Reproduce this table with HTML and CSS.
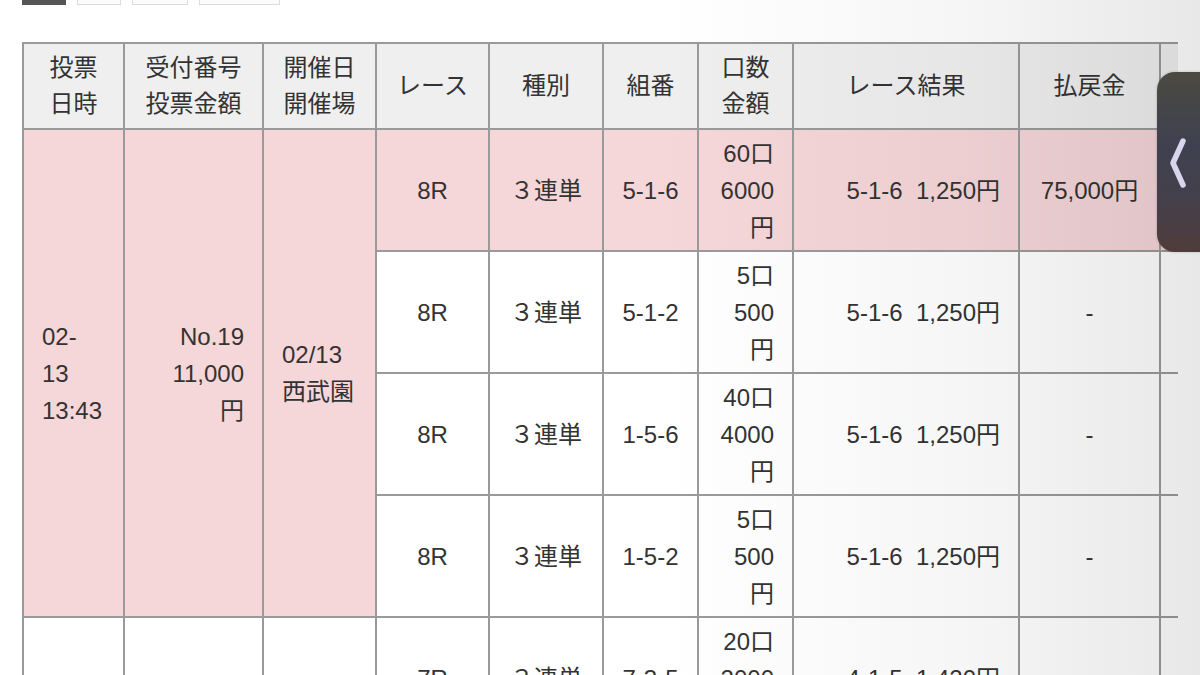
FILE: index.html
```html
<!DOCTYPE html>
<html lang="ja">
<head>
<meta charset="utf-8">
<link rel="stylesheet" href="styles.css">
</head>
<body>
<div class="tabs">
  <span class="tab tab-active t1"></span>
  <span class="tab t2"></span>
  <span class="tab t3"></span>
  <span class="tab t4"></span>
</div>
<div class="wrap">
  <table class="bets">
    <colgroup>
      <col class="c1"><col class="c2"><col class="c3"><col class="c4"><col class="c5">
      <col class="c6"><col class="c7"><col class="c8"><col class="c9"><col class="c10">
    </colgroup>
    <thead>
      <tr>
        <th>投票<br>日時</th>
        <th>受付番号<br>投票金額</th>
        <th>開催日<br>開催場</th>
        <th>レース</th>
        <th>種別</th>
        <th>組番</th>
        <th>口数<br>金額</th>
        <th>レース結果</th>
        <th>払戻金</th>
        <th></th>
      </tr>
    </thead>
    <tbody>
      <tr class="hit">
        <td rowspan="4" class="pink left">02-<br>13<br>13:43</td>
        <td rowspan="4" class="pink right">No.19<br>11,000<br>円</td>
        <td rowspan="4" class="pink left">02/13<br>西武園</td>
        <td class="center">8R</td>
        <td class="center">３連単</td>
        <td class="center">5-1-6</td>
        <td class="right">60口<br>6000<br>円</td>
        <td class="right">5-1-6&nbsp;&nbsp;1,250円</td>
        <td class="center">75,000円</td>
        <td></td>
      </tr>
      <tr>
        <td class="center">8R</td>
        <td class="center">３連単</td>
        <td class="center">5-1-2</td>
        <td class="right">5口<br>500<br>円</td>
        <td class="right">5-1-6&nbsp;&nbsp;1,250円</td>
        <td class="center">-</td>
        <td></td>
      </tr>
      <tr>
        <td class="center">8R</td>
        <td class="center">３連単</td>
        <td class="center">1-5-6</td>
        <td class="right">40口<br>4000<br>円</td>
        <td class="right">5-1-6&nbsp;&nbsp;1,250円</td>
        <td class="center">-</td>
        <td></td>
      </tr>
      <tr>
        <td class="center">8R</td>
        <td class="center">３連単</td>
        <td class="center">1-5-2</td>
        <td class="right">5口<br>500<br>円</td>
        <td class="right">5-1-6&nbsp;&nbsp;1,250円</td>
        <td class="center">-</td>
        <td></td>
      </tr>
      <tr>
        <td rowspan="4" class="left"></td>
        <td rowspan="4" class="right"></td>
        <td rowspan="4" class="left"></td>
        <td class="center">7R</td>
        <td class="center">３連単</td>
        <td class="center">7-3-5</td>
        <td class="right">20口<br>2000<br>円</td>
        <td class="right">4-1-5&nbsp;&nbsp;1,420円</td>
        <td class="center"></td>
        <td></td>
      </tr>
      <tr><td></td><td></td><td></td><td></td><td></td><td></td><td></td></tr>
      <tr><td></td><td></td><td></td><td></td><td></td><td></td><td></td></tr>
      <tr><td></td><td></td><td></td><td></td><td></td><td></td><td></td></tr>
    </tbody>
  </table>
</div>
<div class="shade"></div>
<div class="handle">
  <svg class="chev" width="24" height="60" viewBox="0 0 24 60">
    <polyline points="16,7 6,29 16,51" fill="none" stroke="#d9d5ec" stroke-width="5.5" stroke-linecap="round" stroke-linejoin="round"/>
  </svg>
</div>
</body>
</html>
```
FILE: styles.css
```css
html, body {
  margin: 0;
  padding: 0;
  background: #ffffff;
  height: 675px;
  overflow: hidden;
}
body {
  font-family: "Liberation Sans", "Noto Sans CJK JP", sans-serif;
  color: #333333;
  position: relative;
}
.tabs {
  display: flex;
  gap: 11px;
  height: 5px;
  margin-left: 22px;
  overflow: hidden;
}
.tab {
  display: block;
  height: 4px;
  background: #fbfbfb;
  border: 1px solid #dcdcdc;
  border-top: none;
}
.tab-active {
  background: #555555;
  border-color: #555555;
}
.t1 { width: 42px; }
.t2 { width: 42px; }
.t3 { width: 54px; }
.t4 { width: 79px; }
.wrap {
  margin-top: 37px;
  margin-left: 22px;
  width: 1156px;
  overflow: hidden;
}
.bets {
  border-collapse: collapse;
  table-layout: fixed;
  width: 1290px;
  font-size: 24px;
  line-height: 37px;
}
.c1 { width: 101px; }
.c2 { width: 139px; }
.c3 { width: 113px; }
.c4 { width: 113px; }
.c5 { width: 114px; }
.c6 { width: 95px; }
.c7 { width: 95px; }
.c8 { width: 226px; }
.c9 { width: 141px; }
.c10 { width: 153px; }
.bets th, .bets td {
  border: 2px solid #9a9a9a;
  padding: 0 18px;
  vertical-align: middle;
  white-space: nowrap;
}
.bets th {
  background: #efefef;
  font-weight: normal;
  text-align: center;
  height: 84px;
  line-height: 36px;
  padding: 0;
}
.bets td {
  height: 120px;
}
.hit td, .pink {
  background: #f5d6d9;
}
.left { text-align: left; }
.right { text-align: right; }
.center { text-align: center; padding: 0; }
.shade {
  position: absolute;
  top: 0;
  left: 0;
  width: 1200px;
  height: 675px;
  pointer-events: none;
  background:
    linear-gradient(to right, rgba(0,0,0,0) 55%, rgba(0,0,0,0.035) 80%, rgba(0,0,0,0.09) 100%);
}
.handle {
  position: absolute;
  top: 72px;
  left: 1157px;
  width: 60px;
  height: 180px;
  border-radius: 18px;
  background: linear-gradient(to bottom, #4b4a40 0%, #3f4150 40%, #44404c 70%, #4f3c3b 100%);
  box-shadow: 0 0 3px rgba(0,0,0,0.2);
}
.chev {
  position: absolute;
  left: 10px;
  top: 62px;
}
```
